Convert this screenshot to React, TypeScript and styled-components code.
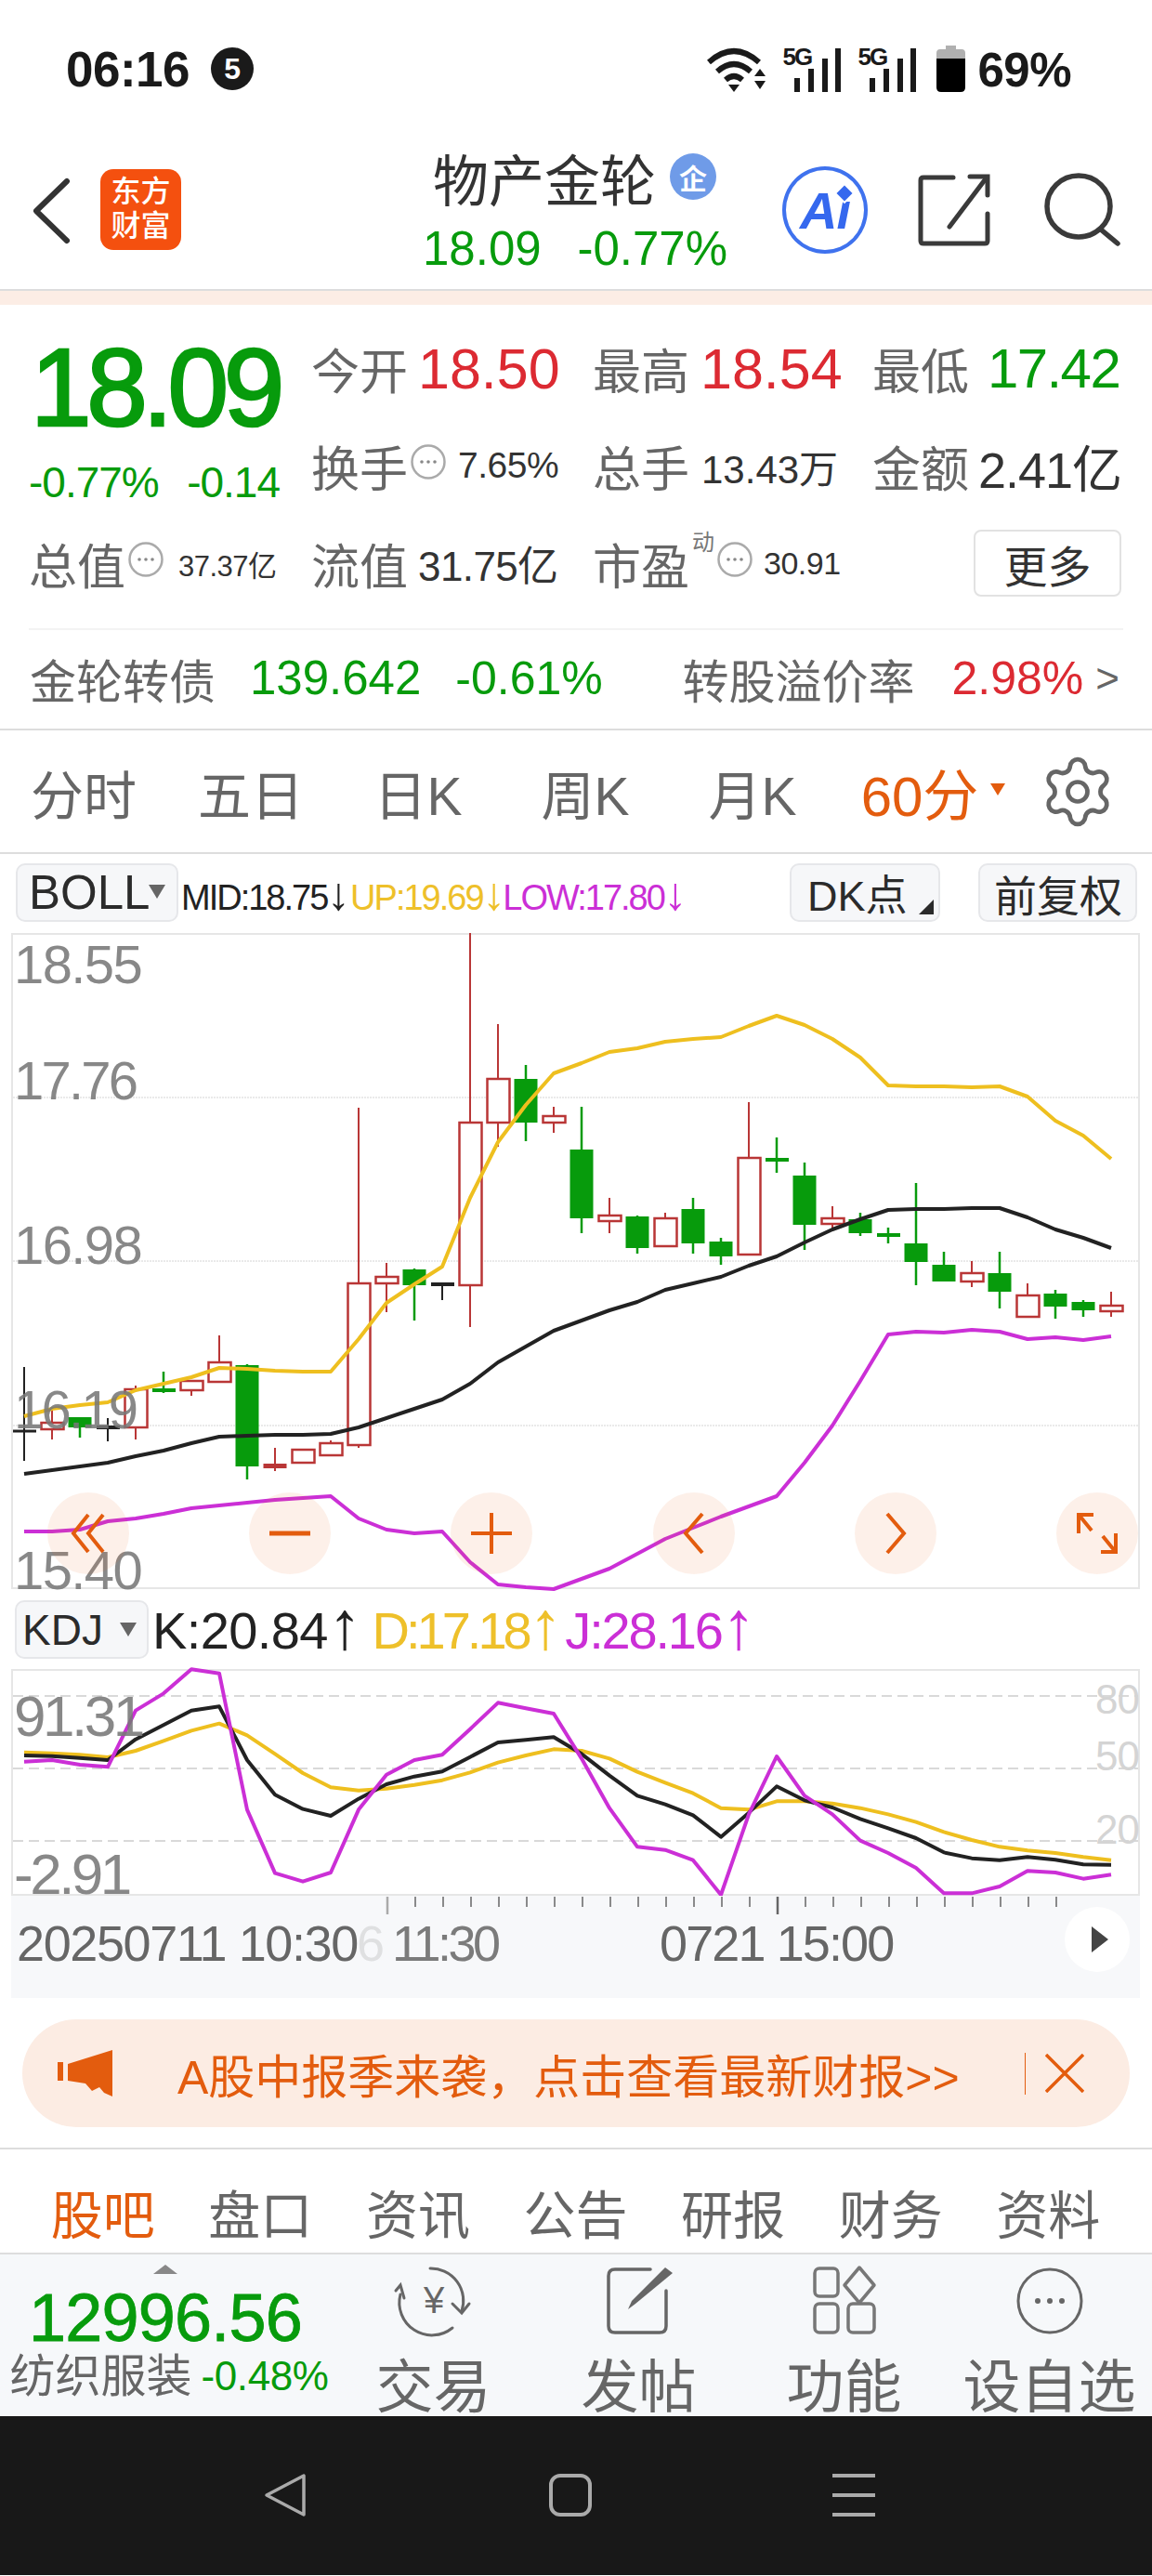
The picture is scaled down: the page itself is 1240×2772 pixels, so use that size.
import React from 'react';
import styled, { createGlobalStyle } from 'styled-components';
import { Settings } from 'lucide-react';

const RED = '#dc2a32';
const GREEN = '#079b0c';
const ORANGE = '#e35c0e';
const CANDLE_RED = '#b93636';
const YELLOW = '#eebf1f';
const MAGENTA = '#cb2fd6';
const INK = '#222222';

const GlobalStyle = createGlobalStyle`
  html, body {
    margin: 0;
    padding: 0;
    background: #fff;
  }
  * {
    box-sizing: border-box;
  }
  body {
    font-family: "Liberation Sans", "Noto Sans CJK SC", sans-serif;
  }
`;

const Page = styled.div`
  width: 1240px;
  height: 2772px;
  display: flex;
  flex-direction: column;
  overflow: hidden;
  background: #fff;
  color: #666;
`;

/* status bar */
const StatusBar = styled.div`
  height: 148px;
  display: flex;
  align-items: center;
  padding-left: 71px;
  color: #1a1a1a;
`;

const Clock = styled.span`
  font-size: 53px;
  font-weight: 700;
  letter-spacing: -0.5px;
`;

const NotifyBadge = styled.span`
  width: 46px;
  height: 46px;
  margin-left: 23px;
  border-radius: 50%;
  background: #1a1a1a;
  color: #fff;
  font-size: 32px;
  font-weight: 700;
  display: flex;
  align-items: center;
  justify-content: center;
`;

const StatusRight = styled.div`
  margin-left: auto;
  margin-right: 87px;
  display: flex;
  align-items: flex-end;
  height: 50px;
`;

const SignalWrap = styled.div`
  position: relative;
  width: 63px;
  height: 48px;
  margin-left: 18px;
`;

const SignalTag = styled.span`
  position: absolute;
  left: 0;
  top: -3px;
  font-size: 26px;
  line-height: 26px;
  font-weight: 700;
  letter-spacing: -2px;
`;

const BatteryPct = styled.span`
  margin-left: 13px;
  font-size: 51px;
  line-height: 46px;
  font-weight: 700;
  letter-spacing: -0.5px;
`;

/* header */
const Header = styled.div`
  position: relative;
  height: 165px;
  border-bottom: 2px solid #dddddd;
  display: flex;
`;

const BackLink = styled.div`
  width: 108px;
  padding: 44px 0 0 34px;
`;

const Logo = styled.div`
  width: 87px;
  height: 87px;
  margin-top: 34px;
  border-radius: 14px;
  background: #f4500f;
  color: #fff;
  font-size: 32px;
  line-height: 37px;
  font-weight: 500;
  text-align: center;
  padding-top: 6px;
`;

const TitleBlock = styled.div`
  position: absolute;
  left: 455px;
  top: 11px;
  width: 328px;
`;

const TitleRow = styled.div`
  display: flex;
  align-items: center;
  padding-left: 11px;
  height: 62px;
  font-size: 60px;
  color: #333;
  white-space: nowrap;
`;

const OrgBadge = styled.span`
  width: 50px;
  height: 50px;
  margin-left: 15px;
  border-radius: 50%;
  background: #6f9be8;
  color: #fff;
  font-size: 30px;
  font-weight: 700;
  display: flex;
  align-items: center;
  justify-content: center;
`;

const TitleQuote = styled.div`
  display: flex;
  justify-content: space-between;
  margin-top: 18px;
  font-size: 51px;
  line-height: 58px;
  color: ${GREEN};
`;

const HeaderTools = styled.div`
  position: absolute;
  left: 842px;
  top: 31px;
  display: flex;
  align-items: center;
`;

const AiRing = styled.div`
  position: relative;
  width: 92px;
  height: 94px;
  border: 4px solid #3f72ee;
  border-radius: 50%;
  color: #3568ee;
  font-size: 56px;
  font-weight: 700;
  font-style: italic;
  display: flex;
  align-items: center;
  justify-content: center;
  letter-spacing: -1px;
`;

const AiSpark = styled.i`
  position: absolute;
  left: 57px;
  top: 19px;
  width: 12px;
  height: 12px;
  background: #3568ee;
  box-shadow: 0 0 0 2px #fff;
  transform: rotate(45deg);
`;

const PinkStrip = styled.div`
  height: 15px;
  background: #fcede5;
`;

/* quote */
const QuoteGrid = styled.div`
  display: grid;
  grid-template-columns: 304px 303px 301px 1fr;
  grid-template-rows: 105px 104px 106px;
  margin-top: 16px;
  padding-left: 31px;
`;

const PriceCell = styled.div`
  grid-row: 1 / 3;
  color: ${GREEN};
`;

const BigPrice = styled.div`
  margin: 14px 0 0 2px;
  font-size: 118px;
  line-height: 118px;
  letter-spacing: -5.5px;
  -webkit-text-stroke: 2.6px ${GREEN};
`;

const PriceChange = styled.div`
  display: flex;
  justify-content: space-between;
  width: 270px;
  margin-top: 18px;
  font-size: 46px;
  line-height: 50px;
  letter-spacing: -1px;
`;

const Metric = styled.div`
  display: flex;
  align-items: center;
  white-space: nowrap;
`;

const Label = styled.span`
  font-size: 52px;
  color: #666;
`;

const Value = styled.span<{ $size: number; $color?: string; $gap?: number; $track?: number }>`
  font-size: ${(p) => p.$size}px;
  color: ${(p) => p.$color || '#333'};
  margin-left: ${(p) => p.$gap || 0}px;
  letter-spacing: ${(p) => p.$track || 0}px;
`;

const HelpDot = styled.svg`
  flex: none;
  margin: 0 0 8px 3px;
`;

const DynTag = styled.sup`
  font-size: 24px;
  line-height: 24px;
  color: #777;
  margin: -44px 0 0 3px;
  align-self: center;
`;

const MoreButton = styled.div`
  justify-self: end;
  align-self: center;
  margin-right: 33px;
  width: 159px;
  height: 72px;
  border: 2px solid #e2e2e2;
  border-radius: 8px;
  color: #333;
  font-size: 47px;
  display: flex;
  align-items: center;
  justify-content: center;
`;

const BondRow = styled.div`
  margin: 17px 31px 0;
  border-top: 2px solid #f3f3f3;
  height: 108px;
  display: flex;
  align-items: center;
  padding: 0 4px 3px 1px;
  white-space: nowrap;
`;

const BondLabel = styled.span<{ $push?: boolean }>`
  font-size: 50px;
  color: #666;
  margin-left: ${(p) => (p.$push ? 'auto' : '0')};
`;

const Chevron = styled.span`
  margin-left: 13px;
  font-size: 44px;
  color: #666;
`;

/* period tabs */
const PeriodTabs = styled.div`
  display: grid;
  grid-template-columns: repeat(6, 180px) 160px;
  border-top: 2px solid #dddddd;
  border-bottom: 2px solid #dddddd;
  height: 135px;
  align-items: center;
  justify-items: center;
  font-size: 57px;
  color: #666;
`;

const PeriodTab = styled.span<{ $active?: boolean }>`
  position: relative;
  color: ${(p) => (p.$active ? ORANGE : '#666')};
  font-size: ${(p) => (p.$active ? 60 : 57)}px;
`;

const PeriodCaret = styled.i`
  position: absolute;
  right: -29px;
  top: 35px;
  border-left: 8px solid transparent;
  border-right: 8px solid transparent;
  border-top: 13px solid ${ORANGE};
`;

/* chart toolbars */
const Toolbar = styled.div<{ $height: number; $top: number }>`
  height: ${(p) => p.$height}px;
  padding: ${(p) => p.$top}px 16px 0 ${(p) => (p.$height > 85 ? 16 : 17)}px;
  display: flex;
  white-space: nowrap;
`;

const ChipButton = styled.div<{ $width: number; $size: number; $gap?: number; $pad?: number; $push?: boolean }>`
  position: relative;
  flex: none;
  width: ${(p) => p.$width}px;
  height: 63px;
  border: 2px solid #e6e7ea;
  border-radius: 10px;
  background: #f6f7f9;
  color: #2b2b2b;
  font-size: ${(p) => p.$size}px;
  display: flex;
  align-items: center;
  padding-left: ${(p) => p.$pad || 0}px;
  margin-left: ${(p) => (p.$push ? 'auto' : `${p.$gap || 0}px`)};
`;

const ChipCaret = styled.i<{ $right: number; $top: number }>`
  position: absolute;
  right: ${(p) => p.$right}px;
  top: ${(p) => p.$top}px;
  border-left: 9px solid transparent;
  border-right: 9px solid transparent;
  border-top: 15px solid #666;
`;

const ChipCorner = styled.i`
  position: absolute;
  right: 5px;
  bottom: 6px;
  width: 0;
  height: 0;
  border-left: 16px solid transparent;
  border-bottom: 16px solid #2b2b2b;
`;

const Legend = styled.span<{ $color: string; $size: number; $gap: number; $track: number; $lift?: number }>`
  color: ${(p) => p.$color};
  font-size: ${(p) => p.$size}px;
  margin: ${(p) => -(p.$lift || 0)}px 0 0 ${(p) => p.$gap}px;
  letter-spacing: ${(p) => p.$track}px;
  align-self: center;
`;

const LegendArrow = styled.span`
  font-size: 1.3em;
  line-height: 0;
  letter-spacing: -0.12em;
`;

const ChartBox = styled.div<{ $height: number }>`
  position: relative;
  flex: none;
  margin: 0 13px 0 12px;
  height: ${(p) => p.$height}px;
  border: 2px solid #e6e6e6;
`;

const ChartSvg = styled.svg`
  display: block;
  overflow: visible;
`;

const AxisLabel = styled.span<{ $top: number; $size?: number; $track?: number }>`
  position: absolute;
  left: 1px;
  top: ${(p) => p.$top}px;
  font-size: ${(p) => p.$size || 58}px;
  line-height: 58px;
  letter-spacing: ${(p) => p.$track ?? -1.6}px;
  color: rgba(120, 120, 120, 0.88);
`;

const RightLabel = styled.span<{ $top: number }>`
  position: absolute;
  right: -1px;
  top: ${(p) => p.$top}px;
  font-size: 44px;
  line-height: 40px;
  letter-spacing: -1px;
  color: #d4d4d4;
`;

const ControlRow = styled.div`
  position: absolute;
  left: 37px;
  right: 0;
  top: 600px;
  display: flex;
  justify-content: space-between;
`;

const ControlButton = styled.div`
  width: 88px;
  height: 88px;
  border-radius: 50%;
  background: rgba(240, 110, 40, 0.1);
  display: flex;
  align-items: center;
  justify-content: center;
`;

/* time axis */
const TimeAxis = styled.div`
  position: relative;
  flex: none;
  height: 110px;
  margin: 0 13px 0 12px;
  background: #f7f8fa;
`;

const TimeTicks = styled.svg`
  position: absolute;
  left: 0;
  top: 0;
`;

const TimeLabel = styled.span<{ $left: number; $fade?: number; $track?: number }>`
  position: absolute;
  left: ${(p) => p.$left}px;
  top: 20px;
  font-size: 54px;
  line-height: 62px;
  letter-spacing: ${(p) => p.$track ?? -1.4}px;
  color: #666;
  opacity: ${(p) => p.$fade ?? 1};
  white-space: nowrap;
`;

const PlayButton = styled.div`
  position: absolute;
  left: 1134px;
  top: 12px;
  width: 70px;
  height: 70px;
  border-radius: 50%;
  background: #fff;
  display: flex;
  align-items: center;
  justify-content: center;
  padding-left: 6px;
`;

const PlayArrow = styled.i`
  border-top: 14px solid transparent;
  border-bottom: 14px solid transparent;
  border-left: 18px solid #444;
`;

/* banner */
const BannerWrap = styled.div`
  flex: none;
  height: 163px;
  padding: 23px 24px 0;
  border-bottom: 2px solid #dddddd;
`;

const Banner = styled.div`
  height: 116px;
  border-radius: 58px;
  background: #fcece3;
  display: flex;
  align-items: center;
  padding: 0 49px 0 38px;
  color: ${ORANGE};
`;

const BannerText = styled.span`
  margin-left: 69px;
  font-size: 50px;
  white-space: nowrap;
`;

const BannerRule = styled.i`
  width: 1px;
  height: 45px;
  margin-left: auto;
  background: ${ORANGE};
`;

const BannerClose = styled.svg`
  margin-left: 21px;
`;

/* content tabs */
const ContentTabs = styled.div`
  flex: none;
  height: 113px;
  display: grid;
  grid-template-columns: repeat(7, 1fr);
  padding: 21px 27px 0 26px;
  align-items: center;
  justify-items: center;
  border-bottom: 2px solid #dddddd;
`;

const ContentTab = styled.span<{ $active?: boolean }>`
  font-size: 56px;
  color: ${(p) => (p.$active ? ORANGE : '#666')};
`;

/* bottom bar */
const Footer = styled.div`
  flex: none;
  height: 174px;
  background: #f6f8fa;
  display: grid;
  grid-template-columns: 356px repeat(4, 1fr);
`;

const IndexBlock = styled.div`
  display: flex;
  flex-direction: column;
  align-items: center;
  white-space: nowrap;
`;

const IndexCaret = styled.i`
  margin-top: 11px;
  border-left: 13px solid transparent;
  border-right: 13px solid transparent;
  border-bottom: 10px solid #888;
`;

const IndexValue = styled.div`
  margin-top: 7px;
  font-size: 72px;
  line-height: 80px;
  letter-spacing: -0.8px;
  color: ${GREEN};
  -webkit-text-stroke: 0.8px ${GREEN};
`;

const IndexSub = styled.div`
  margin: -6px 0 0 8px;
  display: flex;
  align-items: center;
  font-size: 49px;
  line-height: 58px;
  color: #666;
`;

const IndexPct = styled.span`
  margin-left: 10px;
  font-size: 44px;
  letter-spacing: -0.4px;
  color: ${GREEN};
`;

const ToolItem = styled.div`
  display: flex;
  flex-direction: column;
  align-items: center;
  padding-top: 13px;
  font-size: 62px;
  color: #666;
  white-space: nowrap;
`;

const ToolName = styled.span`
  margin-top: 27px;
  line-height: 60px;
`;

const NavBar = styled.div`
  flex: none;
  height: 171px;
  background: #181818;
  display: grid;
  grid-template-columns: 307px 305px 1fr;
  padding: 62px 0 0 284px;
`;

/* [top wick, body top, body bottom, bottom wick, kind] */
type Kind = 'r' | 'g' | 'k' | 'R';
const candles: [number, number, number, number, Kind][] = [
  [1472, 1541, 1541, 1573, 'k'],
  [1517, 1532, 1539, 1550, 'r'],
  [1526, 1526, 1537, 1548, 'g'],
  [1527, 1537, 1537, 1552, 'k'],
  [1492, 1496, 1537, 1550, 'r'],
  [1477, 1497, 1497, 1500, 'g'],
  [1486, 1487, 1497, 1503, 'r'],
  [1438, 1467, 1488, 1488, 'r'],
  [1469, 1470, 1579, 1593, 'g'],
  [1559, 1576, 1581, 1584, 'R'],
  [1560, 1561, 1575, 1575, 'r'],
  [1551, 1554, 1567, 1567, 'r'],
  [1193, 1382, 1556, 1559, 'r'],
  [1360, 1375, 1382, 1413, 'r'],
  [1366, 1367, 1384, 1422, 'g'],
  [1383, 1383, 1383, 1400, 'k'],
  [1005, 1209, 1384, 1429, 'r'],
  [1103, 1162, 1209, 1235, 'r'],
  [1147, 1162, 1209, 1229, 'g'],
  [1192, 1202, 1209, 1220, 'r'],
  [1192, 1238, 1312, 1328, 'g'],
  [1290, 1309, 1315, 1328, 'r'],
  [1309, 1310, 1344, 1350, 'g'],
  [1306, 1312, 1342, 1343, 'r'],
  [1290, 1302, 1339, 1350, 'g'],
  [1333, 1337, 1353, 1362, 'g'],
  [1187, 1247, 1351, 1351, 'r'],
  [1225, 1249, 1249, 1263, 'g'],
  [1252, 1266, 1319, 1346, 'g'],
  [1299, 1312, 1318, 1325, 'r'],
  [1306, 1313, 1328, 1331, 'g'],
  [1322, 1330, 1330, 1339, 'g'],
  [1274, 1339, 1359, 1384, 'g'],
  [1348, 1362, 1380, 1380, 'g'],
  [1358, 1371, 1380, 1386, 'r'],
  [1348, 1371, 1391, 1409, 'g'],
  [1382, 1395, 1418, 1419, 'r'],
  [1389, 1393, 1407, 1420, 'g'],
  [1400, 1402, 1411, 1418, 'g'],
  [1391, 1406, 1412, 1418, 'r'],
];

const bollUp = [1525, 1517, 1513, 1510, 1497, 1490, 1483, 1473, 1474, 1476, 1477, 1477, 1442, 1403, 1383, 1364, 1290, 1230, 1190, 1156, 1145, 1133, 1129, 1122, 1119, 1117, 1105, 1094, 1104, 1119, 1139, 1169, 1170, 1170, 1171, 1170, 1181, 1207, 1223, 1248];
const bollMid = [1587, 1583, 1579, 1575, 1568, 1562, 1554, 1547, 1546, 1545, 1545, 1544, 1537, 1527, 1517, 1507, 1490, 1467, 1450, 1433, 1422, 1411, 1402, 1389, 1382, 1375, 1363, 1353, 1338, 1324, 1313, 1303, 1302, 1302, 1301, 1301, 1311, 1324, 1333, 1344];
const bollLow = [1649, 1649, 1647, 1638, 1635, 1630, 1624, 1621, 1618, 1615, 1613, 1611, 1635, 1647, 1651, 1649, 1682, 1706, 1709, 1711, 1700, 1689, 1673, 1657, 1645, 1633, 1622, 1611, 1575, 1535, 1487, 1437, 1434, 1435, 1432, 1434, 1442, 1440, 1443, 1439];

const kLine = [510, 512, 518, 525, 458, 412, 365, 352, 525, 637, 683, 705, 650, 603, 578, 562, 515, 468, 460, 451, 505, 575, 640, 668, 703, 773, 695, 610, 655, 678, 715, 745, 777, 823, 842, 848, 838, 847, 862, 863];
const dLine = [500, 503, 508, 516, 495, 463, 430, 407, 445, 505, 567, 613, 623, 617, 605, 590, 565, 533, 510, 490, 495, 520, 563, 598, 632, 680, 685, 658, 658, 665, 680, 700, 725, 757, 783, 805, 817, 825, 838, 848];
const jLine = [530, 525, 540, 547, 365, 310, 232, 245, 685, 890, 917, 888, 685, 572, 525, 508, 425, 340, 358, 375, 520, 680, 805, 815, 848, 960, 700, 513, 640, 700, 785, 825, 873, 955, 955, 933, 883, 888, 908, 895];

const slotX = (n: number) => 26 + 30 * n;
const toPoints = (ys: number[]) => ys.map((y, i) => `${slotX(i)},${y}`).join(' ');
const toKdjPoints = (vs: number[]) => toPoints(vs.map((v) => 1720 + v / 3));

const candleColor = (k: Kind) => (k === 'g' ? GREEN : k === 'k' ? INK : CANDLE_RED);

const Candle: React.FC<{ n: number; c: (typeof candles)[number] }> = ({ n, c }) => {
  const [hi, top, bottom, lo, kind] = c;
  const x = slotX(n);
  const color = candleColor(kind);
  const doji = top === bottom;
  return (
    <g>
      <line x1={x} y1={hi} x2={x} y2={lo} stroke={color} strokeWidth={kind === 'g' ? 2.5 : 2} />
      {doji ? (
        <line x1={x - 12} y1={top} x2={x + 13} y2={top} stroke={color} strokeWidth={n === 0 ? 3 : 4} />
      ) : kind === 'r' ? (
        <rect x={x - 11.5} y={top} width={24} height={bottom - top} fill="#fff" stroke={color} strokeWidth={2.5} />
      ) : (
        <rect x={x - 12.5} y={top} width={25} height={bottom - top} fill={color} />
      )}
    </g>
  );
};

const TrendLine: React.FC<{ points: string; color: string; width?: number }> = ({ points, color, width = 4 }) => (
  <polyline points={points} fill="none" stroke={color} strokeWidth={width} strokeLinejoin="round" />
);

const Dots: React.FC = () => (
  <HelpDot width="38" height="38" viewBox="0 0 38 38">
    <circle cx="19" cy="19" r="17.5" fill="none" stroke="#aaa" strokeWidth="2.5" />
    <circle cx="12" cy="19" r="1.8" fill="#888" />
    <circle cx="19" cy="19" r="1.8" fill="#888" />
    <circle cx="26" cy="19" r="1.8" fill="#888" />
  </HelpDot>
);

const Signal: React.FC = () => (
  <SignalWrap>
    <SignalTag>5G</SignalTag>
    <ChartSvg width="63" height="48" viewBox="0 0 63 48">
      <rect x="13" y="33" width="6" height="15" fill="#1a1a1a" />
      <rect x="28" y="23" width="6" height="25" fill="#1a1a1a" />
      <rect x="43" y="12" width="6" height="36" fill="#1a1a1a" />
      <rect x="57" y="1" width="6" height="47" fill="#1a1a1a" />
    </ChartSvg>
  </SignalWrap>
);

const orangeLine = { fill: 'none', stroke: ORANGE, strokeWidth: 4 } as const;

const App: React.FC = () => (
  <Page>
    <GlobalStyle />
    <StatusBar>
      <Clock>06:16</Clock>
      <NotifyBadge>5</NotifyBadge>
      <StatusRight>
        <ChartSvg width="64" height="48" viewBox="0 0 64 48" fill="none" stroke="#1a1a1a" strokeWidth="6">
          <path d="M3 16 Q30 -8 57 16" />
          <path d="M12 26 Q30 10 48 26" />
          <path d="M21 35 Q30 27 39 35" />
          <path d="M24 40 L36 40 L30 48 Z" fill="#1a1a1a" stroke="none" />
          <path d="M52 31 L64 31 L58 23 Z M52 36 L64 36 L58 45 Z" fill="#1a1a1a" stroke="none" />
        </ChartSvg>
        <Signal />
        <Signal />
        <ChartSvg width="31" height="50" viewBox="0 0 31 50" style={{ marginLeft: 22 }}>
          <path d="M10 0 H21 V4 H27 Q31 4 31 8 V14 H0 V8 Q0 4 4 4 H10 Z" fill="#b0b0b0" />
          <path d="M0 14 H31 V45 Q31 50 26 50 H5 Q0 50 0 45 Z" fill="#000" />
        </ChartSvg>
        <BatteryPct>69%</BatteryPct>
      </StatusRight>
    </StatusBar>

    <Header>
      <BackLink>
        <ChartSvg width="42" height="70" viewBox="0 0 42 70">
          <path d="M38 3 L5 35 L38 67" fill="none" stroke="#333" strokeWidth="6" strokeLinecap="round" strokeLinejoin="round" />
        </ChartSvg>
      </BackLink>
      <Logo>
        东方
        <br />
        财富
      </Logo>
      <TitleBlock>
        <TitleRow>
          物产金轮
          <OrgBadge>企</OrgBadge>
        </TitleRow>
        <TitleQuote>
          <span>18.09</span>
          <span>-0.77%</span>
        </TitleQuote>
      </TitleBlock>
      <HeaderTools>
        <AiRing>
          Ai
          <AiSpark />
        </AiRing>
        <ChartSvg width="80" height="80" viewBox="0 0 80 80" style={{ marginLeft: 54 }} fill="none" stroke="#3a3a3a" strokeWidth="5" strokeLinecap="round">
          <path d="M38 5 H6 Q3 5 3 8 V73 Q3 76 6 76 H72 Q75 76 75 73 V44" />
          <path d="M56 4 H75 V24" />
          <path d="M74 5 L34 58" />
        </ChartSvg>
        <ChartSvg width="84" height="80" viewBox="0 0 84 80" style={{ marginLeft: 55 }} fill="none" stroke="#3a3a3a" strokeWidth="5.5" strokeLinecap="round">
          <ellipse cx="38" cy="36" rx="34" ry="33" />
          <path d="M62 61 L80 76" />
        </ChartSvg>
      </HeaderTools>
    </Header>
    <PinkStrip />

    <QuoteGrid>
      <PriceCell>
        <BigPrice>18.09</BigPrice>
        <PriceChange>
          <span>-0.77%</span>
          <span>-0.14</span>
        </PriceChange>
      </PriceCell>
      <Metric>
        <Label>今开</Label>
        <Value $size={61} $color={RED} $gap={11}>18.50</Value>
      </Metric>
      <Metric>
        <Label>最高</Label>
        <Value $size={61} $color={RED} $gap={12}>18.54</Value>
      </Metric>
      <Metric>
        <Label>最低</Label>
        <Value $size={60} $color={GREEN} $gap={20} $track={-1.6}>17.42</Value>
      </Metric>

      <Metric>
        <Label>换手</Label>
        <Dots />
        <Value $size={39} $gap={13} $track={-0.5}>7.65%</Value>
      </Metric>
      <Metric>
        <Label>总手</Label>
        <Value $size={42} $gap={13}>13.43万</Value>
      </Metric>
      <Metric>
        <Label>金额</Label>
        <Value $size={54} $gap={10} $track={-1}>2.41亿</Value>
      </Metric>

      <Metric>
        <Label>总值</Label>
        <Dots />
        <Value $size={31} $gap={16} $track={-0.5}>37.37亿</Value>
      </Metric>
      <Metric>
        <Label>流值</Label>
        <Value $size={44} $gap={11} $track={-0.6}>31.75亿</Value>
      </Metric>
      <Metric>
        <Label>市盈</Label>
        <DynTag>动</DynTag>
        <Dots />
        <Value $size={34} $gap={12} $track={-0.5}>30.91</Value>
      </Metric>
      <MoreButton>更多</MoreButton>
    </QuoteGrid>

    <BondRow>
      <BondLabel>金轮转债</BondLabel>
      <Value $size={51} $color={GREEN} $gap={37}>139.642</Value>
      <Value $size={50} $color={GREEN} $gap={37}>-0.61%</Value>
      <BondLabel $push>转股溢价率</BondLabel>
      <Value $size={50} $color={RED} $gap={40}>2.98%</Value>
      <Chevron>&gt;</Chevron>
    </BondRow>

    <PeriodTabs>
      <PeriodTab>分时</PeriodTab>
      <PeriodTab>五日</PeriodTab>
      <PeriodTab>日K</PeriodTab>
      <PeriodTab>周K</PeriodTab>
      <PeriodTab>月K</PeriodTab>
      <PeriodTab $active>
        60分
        <PeriodCaret />
      </PeriodTab>
      <Settings size={84} color="#666" strokeWidth={1.35} />
    </PeriodTabs>

    <Toolbar $height={85} $top={10}>
      <ChipButton $width={175} $size={51} $pad={12}>
        BOLL
        <ChipCaret $right={12} $top={21} />
      </ChipButton>
      <Legend $color={INK} $size={38} $gap={3} $track={-2}>
        MID:18.75<LegendArrow>↓</LegendArrow>
      </Legend>
      <Legend $color="#eec02a" $size={38} $gap={6} $track={-2}>
        UP:19.69<LegendArrow>↓</LegendArrow>
      </Legend>
      <Legend $color={MAGENTA} $size={38} $gap={3} $track={-2}>
        LOW:17.80<LegendArrow>↓</LegendArrow>
      </Legend>
      <ChipButton $width={162} $size={45} $pad={17} $push>
        DK点
        <ChipCorner />
      </ChipButton>
      <ChipButton $width={171} $size={46} $pad={15} $gap={41}>前复权</ChipButton>
    </Toolbar>

    <ChartBox $height={706}>
      <ChartSvg width="1211" height="702" viewBox="14 1007 1211 702">
        {[1182, 1358, 1535].map((y) => (
          <line key={y} x1="14" y1={y} x2="1225" y2={y} stroke="#d4d4d4" strokeWidth="1" strokeDasharray="2 1" />
        ))}
        {candles.map((c, i) => (
          <Candle key={i} n={i} c={c} />
        ))}
        <TrendLine points={toPoints(bollUp)} color={YELLOW} />
        <TrendLine points={toPoints(bollMid)} color={INK} />
        <TrendLine points={toPoints(bollLow)} color={MAGENTA} />
      </ChartSvg>
      <AxisLabel $top={3}>18.55</AxisLabel>
      <AxisLabel $top={128} $track={-2.8}>17.76</AxisLabel>
      <AxisLabel $top={305}>16.98</AxisLabel>
      <AxisLabel $top={482} $track={-2.8}>16.19</AxisLabel>
      <AxisLabel $top={655}>15.40</AxisLabel>
      <ControlRow>
        <ControlButton>
          <ChartSvg width="40" height="44" viewBox="0 0 40 44" {...orangeLine}>
            <path d="M20 2 L4 22 L20 42" />
            <path d="M36 2 L20 22 L36 42" />
          </ChartSvg>
        </ControlButton>
        <ControlButton>
          <ChartSvg width="44" height="8" viewBox="0 0 44 8">
            <line x1="0" y1="4" x2="44" y2="4" stroke={ORANGE} strokeWidth="5" />
          </ChartSvg>
        </ControlButton>
        <ControlButton>
          <ChartSvg width="44" height="44" viewBox="0 0 44 44" {...orangeLine}>
            <path d="M22 0 V44 M0 22 H44" />
          </ChartSvg>
        </ControlButton>
        <ControlButton>
          <ChartSvg width="24" height="44" viewBox="0 0 24 44" {...orangeLine}>
            <path d="M21 1 L3 22 L21 43" />
          </ChartSvg>
        </ControlButton>
        <ControlButton>
          <ChartSvg width="24" height="44" viewBox="0 0 24 44" {...orangeLine}>
            <path d="M3 1 L21 22 L3 43" />
          </ChartSvg>
        </ControlButton>
        <ControlButton>
          <ChartSvg width="44" height="44" viewBox="0 0 44 44" {...orangeLine}>
            <path d="M2 22 V2 H18 M3 3 L16 19" />
            <path d="M42 22 V42 H26 M41 41 L28 25" />
          </ChartSvg>
        </ControlButton>
      </ControlRow>
    </ChartBox>

    <Toolbar $height={86} $top={12}>
      <ChipButton $width={144} $size={46} $pad={6}>
        KDJ
        <ChipCaret $right={11} $top={22} />
      </ChipButton>
      <Legend $color={INK} $size={56} $gap={4} $track={-0.6} $lift={10}>
        K:20.84<LegendArrow>↑</LegendArrow>
      </Legend>
      <Legend $color="#eec02a" $size={56} $gap={20} $track={-4} $lift={10}>
        D:17.18<LegendArrow>↑</LegendArrow>
      </Legend>
      <Legend $color={MAGENTA} $size={56} $gap={12} $track={-2.2} $lift={10}>
        J:28.16<LegendArrow>↑</LegendArrow>
      </Legend>
    </Toolbar>

    <ChartBox $height={244}>
      <ChartSvg width="1211" height="240" viewBox="14 1799 1211 240">
        {[1826, 1904, 1982].map((y) => (
          <line key={y} x1="14" y1={y} x2="1225" y2={y} stroke="#d9d9d9" strokeWidth="2" strokeDasharray="11 6" />
        ))}
        <TrendLine points={toKdjPoints(dLine)} color={YELLOW} />
        <TrendLine points={toKdjPoints(kLine)} color={INK} />
        <TrendLine points={toKdjPoints(jLine)} color={MAGENTA} />
      </ChartSvg>
      <AxisLabel $top={20} $size={62} $track={-3.5}>91.31</AxisLabel>
      <AxisLabel $top={190} $size={62} $track={-3.5}>-2.91</AxisLabel>
      <RightLabel $top={11}>80</RightLabel>
      <RightLabel $top={72}>50</RightLabel>
      <RightLabel $top={151}>20</RightLabel>
    </ChartBox>

    <TimeAxis>
      <TimeTicks width="1215" height="24" viewBox="12 2042 1215 24">
        {Array.from({ length: 25 }, (_, k) => {
          const x = 417 + 30 * k;
          const major = k === 0 || k === 14;
          return (
            <line
              key={k}
              x1={x}
              y1="2043"
              x2={x}
              y2={major ? 2062 : 2054}
              stroke={k === 0 ? '#aaa' : '#666'}
              strokeWidth={major ? 2.5 : 1.5}
            />
          );
        })}
      </TimeTicks>
      <TimeLabel $left={6}>20250711 10:30</TimeLabel>
      <TimeLabel $left={372} $fade={0.16}>6</TimeLabel>
      <TimeLabel $left={410} $fade={0.85} $track={-3.5}>11:30</TimeLabel>
      <TimeLabel $left={698} $track={-1.9}>0721 15:00</TimeLabel>
      <PlayButton>
        <PlayArrow />
      </PlayButton>
    </TimeAxis>

    <BannerWrap>
      <Banner>
        <ChartSvg width="60" height="50" viewBox="0 0 60 50">
          <rect x="0" y="13" width="6" height="20" fill={ORANGE} />
          <path d="M11 15 L59 0 V50 L50 46 L45 40 L37 44 L30 36 L11 33 Z" fill={ORANGE} />
        </ChartSvg>
        <BannerText>A股中报季来袭，点击查看最新财报&gt;&gt;</BannerText>
        <BannerRule />
        <BannerClose width="42" height="42" viewBox="0 0 42 42" fill="none" stroke={ORANGE} strokeWidth="3.5">
          <path d="M1 1 L41 41 M41 1 L1 41" />
        </BannerClose>
      </Banner>
    </BannerWrap>

    <ContentTabs>
      <ContentTab $active>股吧</ContentTab>
      <ContentTab>盘口</ContentTab>
      <ContentTab>资讯</ContentTab>
      <ContentTab>公告</ContentTab>
      <ContentTab>研报</ContentTab>
      <ContentTab>财务</ContentTab>
      <ContentTab>资料</ContentTab>
    </ContentTabs>

    <Footer>
      <IndexBlock>
        <IndexCaret />
        <IndexValue>12996.56</IndexValue>
        <IndexSub>
          纺织服装
          <IndexPct>-0.48%</IndexPct>
        </IndexSub>
      </IndexBlock>
      <ToolItem>
        <ChartSvg width="84" height="74" viewBox="0 0 84 74" fill="none" stroke="#666" strokeWidth="3" strokeLinecap="round">
          <path d="M38 2 A35 35 0 0 1 72 48" />
          <path d="M62 40 L72 50 L80 40" />
          <path d="M62 66 A35 35 0 0 1 6 30" />
          <path d="M1 26 L6 20 L10 34" />
          <text x="42" y="50" textAnchor="middle" fontSize="40" fill="#666" stroke="none" fontFamily="Liberation Sans">¥</text>
        </ChartSvg>
        <ToolName>交易</ToolName>
      </ToolItem>
      <ToolItem>
        <ChartSvg width="72" height="74" viewBox="0 0 72 74" fill="none" stroke="#666" strokeWidth="3.5" strokeLinecap="round">
          <path d="M48 3 H10 Q3 3 3 10 V64 Q3 71 10 71 H58 Q65 71 65 64 V26" />
          <path d="M64 1 L72 7 L32 40 L24 46 L28 37 Z" fill="#666" stroke="none" />
        </ChartSvg>
        <ToolName>发帖</ToolName>
      </ToolItem>
      <ToolItem>
        <ChartSvg width="68" height="74" viewBox="0 0 68 74" fill="none" stroke="#777" strokeWidth="3.5">
          <rect x="2" y="2" width="25" height="30" rx="5" />
          <path d="M50 1 L66 20 L50 39 L34 20 Z" strokeLinejoin="round" />
          <rect x="2" y="40" width="25" height="31" rx="5" />
          <rect x="38" y="40" width="28" height="31" rx="5" />
        </ChartSvg>
        <ToolName>功能</ToolName>
      </ToolItem>
      <ToolItem>
        <ChartSvg width="74" height="74" viewBox="0 0 74 74" fill="none" stroke="#666" strokeWidth="3">
          <circle cx="37" cy="37" r="34" />
          <circle cx="24" cy="37" r="3" fill="#666" stroke="none" />
          <circle cx="37" cy="37" r="3" fill="#666" stroke="none" />
          <circle cx="50" cy="37" r="3" fill="#666" stroke="none" />
        </ChartSvg>
        <ToolName>设自选</ToolName>
      </ToolItem>
    </Footer>

    <NavBar>
      <ChartSvg width="46" height="46" viewBox="0 0 46 46" fill="none" stroke="#aaa" strokeWidth="3.5" strokeLinejoin="round">
        <path d="M43 2 V44 L3 23 Z" />
      </ChartSvg>
      <ChartSvg width="46" height="46" viewBox="0 0 46 46" fill="none" stroke="#aaa" strokeWidth="4">
        <rect x="2" y="2" width="42" height="42" rx="10" />
      </ChartSvg>
      <ChartSvg width="46" height="46" viewBox="0 0 46 46" stroke="#aaa" strokeWidth="4">
        <path d="M0 2 H46 M0 23 H46 M0 44 H46" />
      </ChartSvg>
    </NavBar>
  </Page>
);

export default App;
